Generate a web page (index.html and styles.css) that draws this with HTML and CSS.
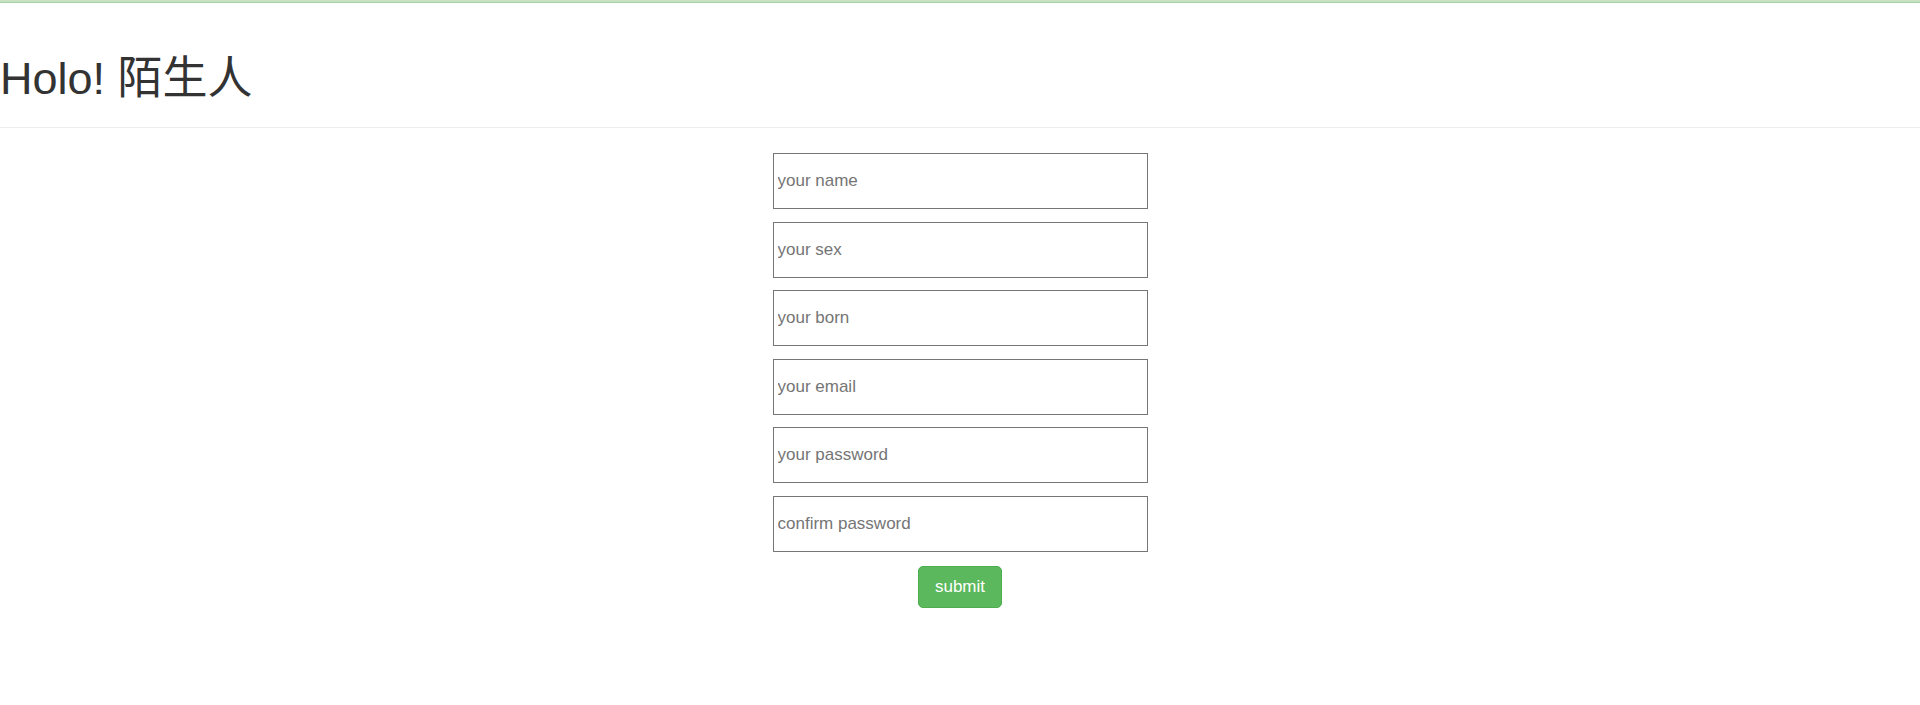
FILE: index.html
```html
<!DOCTYPE html>
<html lang="zh-CN">
<head>
  <meta charset="UTF-8">
  <title>Holo! 陌生人</title>
  <link rel="stylesheet" href="styles.css">
</head>
<body>
  <div class="topbar"></div>
  <div class="page-header">
    <h1>Holo! 陌生人</h1>
  </div>

  <form class="signup" onsubmit="return false;">
    <input type="text" placeholder="your name">
    <input type="text" placeholder="your sex">
    <input type="text" placeholder="your born">
    <input type="email" placeholder="your email">
    <input type="password" placeholder="your password">
    <input type="password" placeholder="confirm password">
    <button type="submit" class="btn-submit">submit</button>
  </form>
</body>
</html>
```

FILE: styles.css
```css
body {
  margin: 0;
  font-family: "Liberation Sans", Arial, "Noto Sans CJK SC", sans-serif;
  color: #333;
  background: #fff;
}

.topbar {
  height: 2px;
  background-color: #c6e2c2;
  border-bottom: 1px solid #a9cfa4;
}

.page-header {
  padding: 51px 0 23px;
  border-bottom: 1px solid #eee;
}

.page-header h1 {
  margin: 0;
  font-size: 45px;
  font-weight: normal;
  line-height: 50px;
  height: 50px;
  color: #333;
}

.signup {
  display: flex;
  flex-direction: column;
  align-items: center;
  gap: 12.6px;
  margin-top: 25px;
}

.signup input {
  box-sizing: border-box;
  width: 375px;
  height: 56px;
  margin: 0;
  padding: 0 4px;
  border: 1px solid #767676;
  font-family: "Liberation Sans", Arial, sans-serif;
  font-size: 17px;
  color: #333;
}

.signup input::placeholder {
  color: #757575;
}

.btn-submit {
  margin-top: 1px;
  padding: 8px 16px;
  line-height: 24px;
  font-family: "Liberation Sans", Arial, sans-serif;
  font-size: 17px;
  color: #fff;
  background-color: #5cb85c;
  border: 1px solid #4cae4c;
  border-radius: 5px;
  cursor: pointer;
}

.btn-submit:hover {
  background-color: #449d44;
}
```
